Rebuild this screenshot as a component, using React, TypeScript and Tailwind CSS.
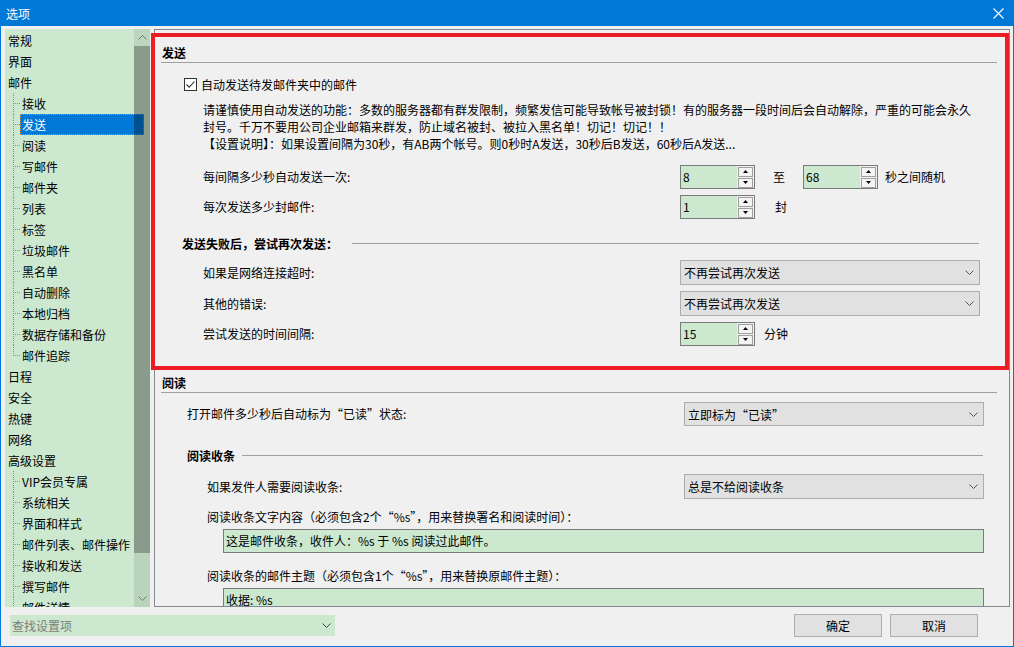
import React from "react";

type TreeItem = { label: string; level: 0 | 1; last?: boolean; selected?: boolean };

const treeItems: TreeItem[] = [
  { label: "常规", level: 0 },
  { label: "界面", level: 0 },
  { label: "邮件", level: 0 },
  { label: "接收", level: 1 },
  { label: "发送", level: 1, selected: true },
  { label: "阅读", level: 1 },
  { label: "写邮件", level: 1 },
  { label: "邮件夹", level: 1 },
  { label: "列表", level: 1 },
  { label: "标签", level: 1 },
  { label: "垃圾邮件", level: 1 },
  { label: "黑名单", level: 1 },
  { label: "自动删除", level: 1 },
  { label: "本地归档", level: 1 },
  { label: "数据存储和备份", level: 1 },
  { label: "邮件追踪", level: 1, last: true },
  { label: "日程", level: 0 },
  { label: "安全", level: 0 },
  { label: "热键", level: 0 },
  { label: "网络", level: 0 },
  { label: "高级设置", level: 0 },
  { label: "VIP会员专属", level: 1 },
  { label: "系统相关", level: 1 },
  { label: "界面和样式", level: 1 },
  { label: "邮件列表、邮件操作", level: 1 },
  { label: "接收和发送", level: 1 },
  { label: "撰写邮件", level: 1 },
  { label: "邮件详情", level: 1 },
];

function Chevron({ color = "#555" }: { color?: string }) {
  return (
    <svg width="9" height="5" viewBox="0 0 9 5" className="shrink-0">
      <path d="M0.5 0.5 L4.5 4.5 L8.5 0.5" fill="none" stroke={color} strokeWidth="1" />
    </svg>
  );
}

function Select({ text, h = "h-[25px]" }: { text: string; h?: string }) {
  return (
    <div
      className={`flex ${h} w-[300px] shrink-0 items-center justify-between border border-[#adadad] bg-[#e1e1e1] pl-[3px] pr-[5px] text-[12px] leading-[17px]`}
    >
      <span>{text}</span>
      <Chevron />
    </div>
  );
}

function SpinBtn({ up }: { up?: boolean }) {
  return (
    <div className="flex h-[10px] w-[15px] items-center justify-center border border-[#a0a0a0] bg-[#f4f4f4]">
      <svg width="5" height="3" viewBox="0 0 5 3">
        {up ? <path d="M0 3 L2.5 0 L5 3Z" fill="#000" /> : <path d="M0 0 L2.5 3 L5 0Z" fill="#000" />}
      </svg>
    </div>
  );
}

function Spin({ value }: { value: string }) {
  return (
    <div className="flex h-[24px] w-[75px] shrink-0 border border-[#7a7a7a] bg-[#f0f0f0]">
      <div className="w-[56px] bg-[#cce8cf] pl-[2px] text-[12px] leading-[21px]">{value}</div>
      <div className="flex flex-1 flex-col items-center justify-center gap-[1px]">
        <SpinBtn up />
        <SpinBtn />
      </div>
    </div>
  );
}

function Connector({ last }: { last?: boolean }) {
  return (
    <svg width="15" height="21" viewBox="0 0 15 21" className="shrink-0">
      <line x1="8.5" y1="0" x2="8.5" y2={last ? 11 : 21} stroke="#8c8c8c" strokeWidth="1" strokeDasharray="1 1" />
      <line x1="10" y1="10.5" x2="15" y2="10.5" stroke="#8c8c8c" strokeWidth="1" strokeDasharray="1 1" />
    </svg>
  );
}

function Tree() {
  return (
    <div className="relative h-[578px] w-[145px] shrink-0 overflow-hidden bg-[#cce8cf] text-[12px] text-black">
      <div className="pt-[1px]">
        {treeItems.map((it, i) =>
          it.level === 0 ? (
            <div key={i} className="h-[21px] pl-[3px] leading-[21px]">
              {it.label}
            </div>
          ) : (
            <div key={i} className="flex h-[21px]">
              <Connector last={it.last} />
              {it.selected ? (
                <div className="h-[21px] w-[124px] border border-dotted border-[#e08a30] bg-[#0078d7] pl-[1px] leading-[19px] text-white">
                  {it.label}
                </div>
              ) : (
                <div className="pl-[2px] leading-[21px] whitespace-nowrap">{it.label}</div>
              )}
            </div>
          )
        )}
      </div>
      <div className="absolute right-0 top-0 flex h-full w-[16px] flex-col">
        <div className="flex h-[17px] items-center justify-center bg-black/[0.08]">
          <svg width="9" height="5" viewBox="0 0 9 5">
            <path d="M0.5 4.5 L4.5 0.5 L8.5 4.5" fill="none" stroke="#6d7d6e" strokeWidth="1" />
          </svg>
        </div>
        <div className="h-[507px] bg-black/[0.33]" />
        <div className="flex-1 bg-black/[0.09]" />
        <div className="flex h-[17px] items-center justify-center bg-black/[0.09]">
          <Chevron color="#6d7d6e" />
        </div>
      </div>
    </div>
  );
}

function Heading({ text, mt }: { text: string; mt: string }) {
  return (
    <div className={`${mt} border-b border-[#a0a0a0] pb-[1px] pl-[1px] text-[12px] font-bold leading-[17px]`}>{text}</div>
  );
}

function GroupHeading({ text, mt, ml, mr, gap }: { text: string; mt: string; ml: string; mr: string; gap: string }) {
  return (
    <div className={`${mt} ${ml} ${mr} flex h-[17px] items-center`}>
      <span className="text-[12px] font-bold leading-[17px] whitespace-nowrap">{text}</span>
      <div className={`${gap} h-px flex-1 bg-[#a0a0a0]`} />
    </div>
  );
}

function Panel() {
  return (
    <div className="h-[578px] w-[856px] shrink-0 overflow-hidden border border-[#828790] bg-[#f0f0f0] text-[12px] text-black">
      <div className="flex flex-col pl-[6px] pr-[12px]">
        <Heading text="发送" mt="mt-[14px]" />

        <div className="mt-[13px] ml-[23px] flex h-[17px] items-center">
          <div className="flex h-[13px] w-[13px] items-center justify-center border border-[#333] bg-white">
            <svg width="11" height="11" viewBox="0 0 11 11">
              <path d="M1.5 5.5 L4.2 8.2 L9.5 2.5" fill="none" stroke="#333" strokeWidth="1.1" />
            </svg>
          </div>
          <span className="ml-[4px] leading-[17px]">自动发送待发邮件夹中的邮件</span>
        </div>

        <div className="mt-[8px] ml-[42px] whitespace-nowrap leading-[17px]">
          请谨慎使用自动发送的功能：多数的服务器都有群发限制，频繁发信可能导致帐号被封锁！有的服务器一段时间后会自动解除，严重的可能会永久
          <br />
          封号。千万不要用公司企业邮箱来群发，防止域名被封、被拉入黑名单！切记！切记！！
          <br />
          【设置说明】：如果设置间隔为30秒，有AB两个帐号。则0秒时A发送，30秒后B发送，60秒后A发送...
        </div>

        <div className="mt-[13px] ml-[42px] flex items-center">
          <div className="w-[477px] shrink-0">每间隔多少秒自动发送一次:</div>
          <Spin value="8" />
          <span className="ml-[18px]">至</span>
          <div className="ml-[18px]">
            <Spin value="68" />
          </div>
          <span className="ml-[7px]">秒之间随机</span>
        </div>

        <div className="mt-[6px] ml-[42px] flex items-center">
          <div className="w-[477px] shrink-0">每次发送多少封邮件:</div>
          <Spin value="1" />
          <span className="ml-[20px]">封</span>
        </div>

        <GroupHeading text="发送失败后，尝试再次发送：" mt="mt-[16px]" ml="ml-[21px]" mr="mr-[18px]" gap="ml-[14px]" />

        <div className="mt-[8px] ml-[42px] flex items-center">
          <div className="w-[477px] shrink-0">如果是网络连接超时:</div>
          <Select text="不再尝试再次发送" />
        </div>
        <div className="mt-[6px] ml-[42px] flex items-center">
          <div className="w-[477px] shrink-0">其他的错误:</div>
          <Select text="不再尝试再次发送" />
        </div>
        <div className="mt-[6px] ml-[42px] flex items-center">
          <div className="w-[477px] shrink-0">尝试发送的时间间隔:</div>
          <Spin value="15" />
          <span className="ml-[9px]">分钟</span>
        </div>

        <Heading text="阅读" mt="mt-[28px]" />

        <div className="mt-[9px] ml-[26px] flex items-center">
          <div className="w-[497px] shrink-0">打开邮件多少秒后自动标为“已读”状态:</div>
          <Select text="立即标为“已读”" h="h-[24px]" />
        </div>

        <GroupHeading text="阅读收条" mt="mt-[21px]" ml="ml-[26px]" mr="mr-[14px]" gap="ml-[7px]" />

        <div className="mt-[10px] ml-[46px] flex items-center">
          <div className="w-[477px] shrink-0">如果发件人需要阅读收条:</div>
          <Select text="总是不给阅读收条" />
        </div>

        <div className="mt-[9px] ml-[46px] leading-[17px] whitespace-nowrap">
          阅读收条文字内容（必须包含2个“%s”，用来替换署名和阅读时间）：
        </div>
        <div className="mt-[4px] ml-[62px] h-[24px] w-[761px] border border-[#7a7a7a] bg-[#cce8cf] pl-[2px] leading-[22px] whitespace-nowrap">
          这是邮件收条，收件人：%s 于 %s 阅读过此邮件。
        </div>

        <div className="mt-[14px] ml-[46px] leading-[17px] whitespace-nowrap">
          阅读收条的邮件主题（必须包含1个“%s”，用来替换原邮件主题）：
        </div>
        <div className="mt-[4px] ml-[62px] h-[24px] w-[761px] border border-[#7a7a7a] bg-[#cce8cf] pl-[2px] leading-[22px] whitespace-nowrap">
          收据: %s
        </div>
      </div>
    </div>
  );
}

export default function App() {
  return (
    <div className="relative flex h-[647px] w-[1014px] flex-col overflow-hidden border border-[#0078d7] bg-[#f0f0f0] font-['Noto_Sans_CJK_SC','Noto_Sans',sans-serif] text-black">
      <div className="flex h-[25px] shrink-0 items-center justify-between bg-[#0078d7] pl-[5px] pr-[9px] text-[12px] text-white">
        <span>选项</span>
        <svg width="11" height="11" viewBox="0 0 11 11">
          <path d="M0.5 0.5 L10.5 10.5 M10.5 0.5 L0.5 10.5" stroke="#fff" strokeWidth="1.1" />
        </svg>
      </div>

      <div className="mt-[3px] flex gap-[4px] pl-[4px]">
        <Tree />
        <Panel />
      </div>

      <div className="flex items-start">
        <div className="mt-[8px] ml-[9px] flex h-[21px] w-[325px] items-center justify-between bg-[#cce8cf] pl-[2px] pr-[4px] text-[12px] text-[#7d7d7d]">
          <span>查找设置项</span>
          <Chevron color="#444" />
        </div>
        <div className="ml-auto mr-[35px] mt-[7px] flex gap-[8px]">
          <div className="flex h-[23px] w-[88px] items-center justify-center border border-[#adadad] bg-[#e1e1e1] text-[12px]">
            确定
          </div>
          <div className="flex h-[23px] w-[88px] items-center justify-center border border-[#adadad] bg-[#e1e1e1] text-[12px]">
            取消
          </div>
        </div>
      </div>

      <div className="absolute left-[150px] top-[32px] h-[337px] w-[858px] border-4 border-[#ec1c24]" />
    </div>
  );
}
